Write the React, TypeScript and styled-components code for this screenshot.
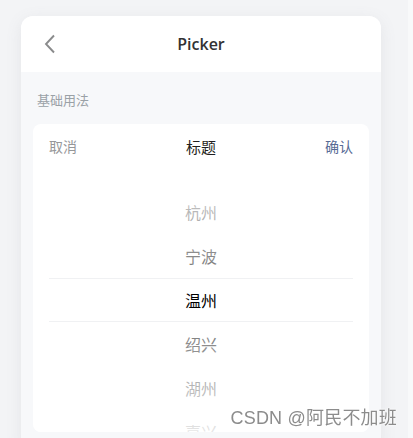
import React from "react";
import styled, { createGlobalStyle } from "styled-components";

const GlobalStyle = createGlobalStyle`
  html, body {
    margin: 0;
    padding: 0;
    background: #f3f4f6;
    font-family: "Open Sans", "Noto Sans CJK SC", sans-serif;
    overflow: hidden;
  }
`;

const Page = styled.div`
  display: flex;
  height: 438px;
`;

const Stage = styled.div`
  flex: 1;
  padding: 16px 0 0 21px;
`;

const ScrollStrip = styled.div`
  width: 5px;
  background: #f8f9fa;
`;

const Phone = styled.div`
  width: 360px;
  height: 430px;
  background: #f7f8fa;
  border-radius: 12px 12px 0 0;
  box-shadow: 0 4px 16px rgba(125, 126, 128, 0.12);
  overflow: hidden;
`;

const NavBar = styled.div`
  position: relative;
  height: 56px;
  background: #fff;
  display: flex;
  align-items: center;
  justify-content: center;
`;

const BackButton = styled.div`
  position: absolute;
  left: 22px;
  top: 18px;
  width: 14px;
  height: 20px;
  display: flex;
`;

const NavTitle = styled.div`
  font-size: 16px;
  font-weight: 600;
  color: #323233;
`;

const DemoTitle = styled.h2`
  margin: 0;
  padding: 20px 16px 16px;
  font-size: 13px;
  font-weight: 400;
  line-height: 16px;
  color: #9aa1a6;
`;

const Card = styled.div`
  margin: 0 12px;
  background: #fff;
  border-radius: 8px;
  overflow: hidden;
`;

const Toolbar = styled.div`
  height: 44px;
  display: flex;
  align-items: center;
  justify-content: space-between;
  padding: 0 16px;
`;

const ToolButton = styled.span<{ $tone: "cancel" | "confirm" }>`
  font-size: 14px;
  color: ${(p) => (p.$tone === "confirm" ? "#576b95" : "#969799")};
`;

const ToolTitle = styled.span`
  font-size: 15px;
  font-weight: 400;
  color: #1f1f20;
`;

const Columns = styled.div`
  position: relative;
  height: 264px;
  overflow: hidden;
`;

const OptionList = styled.ul<{ $offset: number }>`
  list-style: none;
  margin: 0;
  padding: ${(p) => p.$offset}px 0 0;
`;

const Option = styled.li`
  height: 44px;
  display: flex;
  align-items: center;
  justify-content: center;
  font-size: 16px;
  color: #000;
`;

const Mask = styled.div`
  position: absolute;
  inset: 0;
  pointer-events: none;
  background-image: linear-gradient(180deg, rgba(255, 255, 255, 0.9), rgba(255, 255, 255, 0.45)),
    linear-gradient(0deg, rgba(255, 255, 255, 0.9), rgba(255, 255, 255, 0.45));
  background-repeat: no-repeat;
  background-position: top, bottom;
  background-size: 100% 110px;
`;

const Frame = styled.div`
  position: absolute;
  left: 16px;
  right: 16px;
  top: 110px;
  height: 44px;
  border-top: 1px solid #f0f1f3;
  border-bottom: 1px solid #f0f1f3;
  box-sizing: border-box;
  pointer-events: none;
`;

const Watermark = styled.div`
  position: fixed;
  right: 16px;
  bottom: 9px;
  font-family: "Liberation Sans", "Noto Sans CJK SC", sans-serif;
  font-size: 18px;
  color: #8c8c8c;
  text-shadow: 0 0 2px #fff, 0 0 2px #fff;
  letter-spacing: 0.2px;
`;

const cities = ["杭州", "宁波", "温州", "绍兴", "湖州", "嘉兴"];

const App = () => {
  return (
    <>
      <GlobalStyle />
      <Page>
        <Stage>
          <Phone>
            <NavBar>
              <BackButton>
                <svg width="14" height="20" viewBox="0 0 14 20">
                  <polyline
                    points="11,1.5 3,10 11,18.5"
                    fill="none"
                    stroke="#8a8b8c"
                    strokeWidth="1.9"
                  />
                </svg>
              </BackButton>
              <NavTitle>Picker</NavTitle>
            </NavBar>
            <DemoTitle>基础用法</DemoTitle>
            <Card>
              <Toolbar>
                <ToolButton $tone="cancel">取消</ToolButton>
                <ToolTitle>标题</ToolTitle>
                <ToolButton $tone="confirm">确认</ToolButton>
              </Toolbar>
              <Columns>
                <OptionList $offset={22}>
                  {cities.map((c) => (
                    <Option key={c}>{c}</Option>
                  ))}
                </OptionList>
                <Mask />
                <Frame />
              </Columns>
            </Card>
          </Phone>
        </Stage>
        <ScrollStrip />
      </Page>
      <Watermark>CSDN @阿民不加班</Watermark>
    </>
  );
};

export default App;
